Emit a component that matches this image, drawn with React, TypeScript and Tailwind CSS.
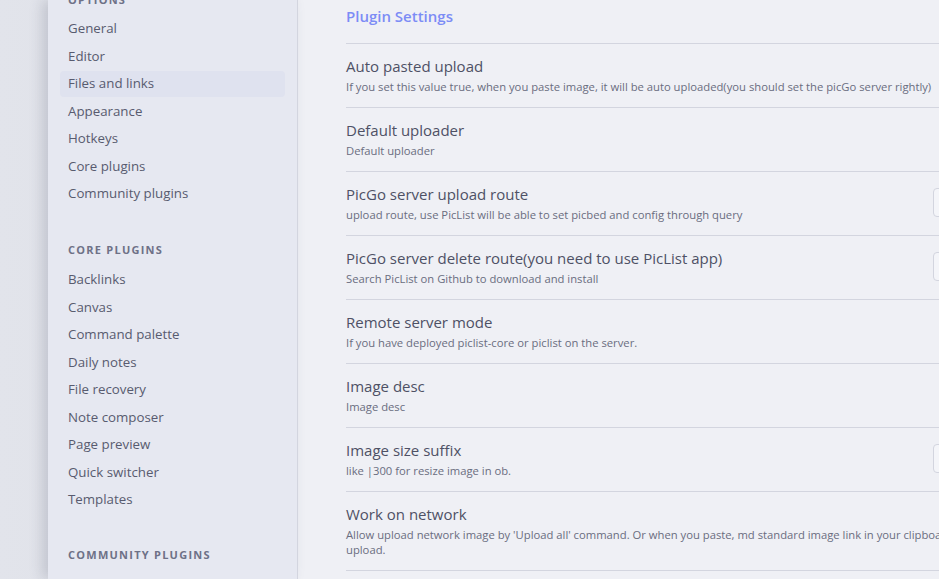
import React from "react";

const optionItems = [
  "General",
  "Editor",
  "Files and links",
  "Appearance",
  "Hotkeys",
  "Core plugins",
  "Community plugins",
];

const coreItems = [
  "Backlinks",
  "Canvas",
  "Command palette",
  "Daily notes",
  "File recovery",
  "Note composer",
  "Page preview",
  "Quick switcher",
  "Templates",
];

type Setting = {
  name: string;
  desc: string;
  control: "toggle" | "input" | "select";
};

const settings: Setting[] = [
  {
    name: "Auto pasted upload",
    desc: "If you set this value true, when you paste image, it will be auto uploaded(you should set the picGo server rightly)",
    control: "toggle",
  },
  { name: "Default uploader", desc: "Default uploader", control: "select" },
  {
    name: "PicGo server upload route",
    desc: "upload route, use PicList will be able to set picbed and config through query",
    control: "input",
  },
  {
    name: "PicGo server delete route(you need to use PicList app)",
    desc: "Search PicList on Github to download and install",
    control: "input",
  },
  {
    name: "Remote server mode",
    desc: "If you have deployed piclist-core or piclist on the server.",
    control: "toggle",
  },
  { name: "Image desc", desc: "Image desc", control: "select" },
  {
    name: "Image size suffix",
    desc: "like |300 for resize image in ob.",
    control: "input",
  },
  {
    name: "Work on network",
    desc: "Allow upload network image by 'Upload all' command. Or when you paste, md standard image link in your clipboard will be auto\nupload.",
    control: "toggle",
  },
];

function NavHeader({ label }: { label: string }) {
  return (
    <div className="h-[32px] flex items-center px-[8px] text-[11px] font-bold tracking-[1.25px] uppercase text-[#6e7187]">
      {label}
    </div>
  );
}

function NavItem({ label, active }: { label: string; active?: boolean }) {
  return (
    <div
      className={
        "h-[26px] flex items-center px-[8px] rounded-[4px] text-[13.3px] text-[#585b6f] " +
        (active ? "bg-[#dfe2ef]" : "")
      }
    >
      {label}
    </div>
  );
}

function Control({ kind }: { kind: Setting["control"] }) {
  if (kind === "input") {
    return (
      <div className="w-[187px] h-[29px] rounded-[4px] border border-[#d3d5df] bg-[#f4f5f9] shrink-0" />
    );
  }
  if (kind === "select") {
    return <div className="w-[120px] h-[29px] rounded-[4px] bg-[#e4e6ef] shrink-0" />;
  }
  return <div className="w-[40px] h-[20px] rounded-full bg-[#d6d8e2] shrink-0" />;
}

export default function App() {
  return (
    <div
      className="w-[939px] h-[579px] overflow-hidden flex bg-gradient-to-r from-[#e2e4eb] to-[#d3d5dd]"
      style={{ fontFamily: '"Open Sans", "Noto Sans", sans-serif' }}
    >
      <div className="w-[48px] shrink-0" />

      {/* sidebar */}
      <div className="w-[250px] shrink-0 bg-[#e6e8f1] border-r border-[#d3d5df] overflow-hidden shadow-[-6px_0_12px_rgba(60,64,90,0.18)] relative">
        <div className="px-[12px] mt-[-16px] flex flex-col">
          <NavHeader label="Options" />
          <div className="flex flex-col gap-[1.5px]">
            {optionItems.map((it) => (
              <NavItem key={it} label={it} active={it === "Files and links"} />
            ))}
          </div>
          <div className="h-[27px]" />
          <NavHeader label="Core plugins" />
          <div className="flex flex-col gap-[1.5px] mt-[1px]">
            {coreItems.map((it) => (
              <NavItem key={it} label={it} />
            ))}
          </div>
          <div className="h-[26px]" />
          <NavHeader label="Community plugins" />
        </div>
      </div>

      {/* content */}
      <div className="flex-1 bg-[#eff0f5] overflow-hidden pl-[48px]">
        <div className="w-[774px]">
          <div className="h-[43px] leading-[32px] text-[15px] font-semibold text-[#7c8cf6]">
            Plugin Settings
          </div>
          {settings.map((s) => (
            <div
              key={s.name}
              className="border-t border-[#d3d5df] pt-[11px] pb-[13px] flex items-center gap-[16px] last:border-b"
            >
              <div className="flex-1 min-w-0">
                <div className="text-[15px] leading-[22px] text-[#4e5165]">{s.name}</div>
                <div className="mt-[2px] text-[11.25px] leading-[15px] text-[#6a6d80] whitespace-pre-line">
                  {s.desc}
                </div>
              </div>
              <Control kind={s.control} />
            </div>
          ))}
        </div>
      </div>
    </div>
  );
}
